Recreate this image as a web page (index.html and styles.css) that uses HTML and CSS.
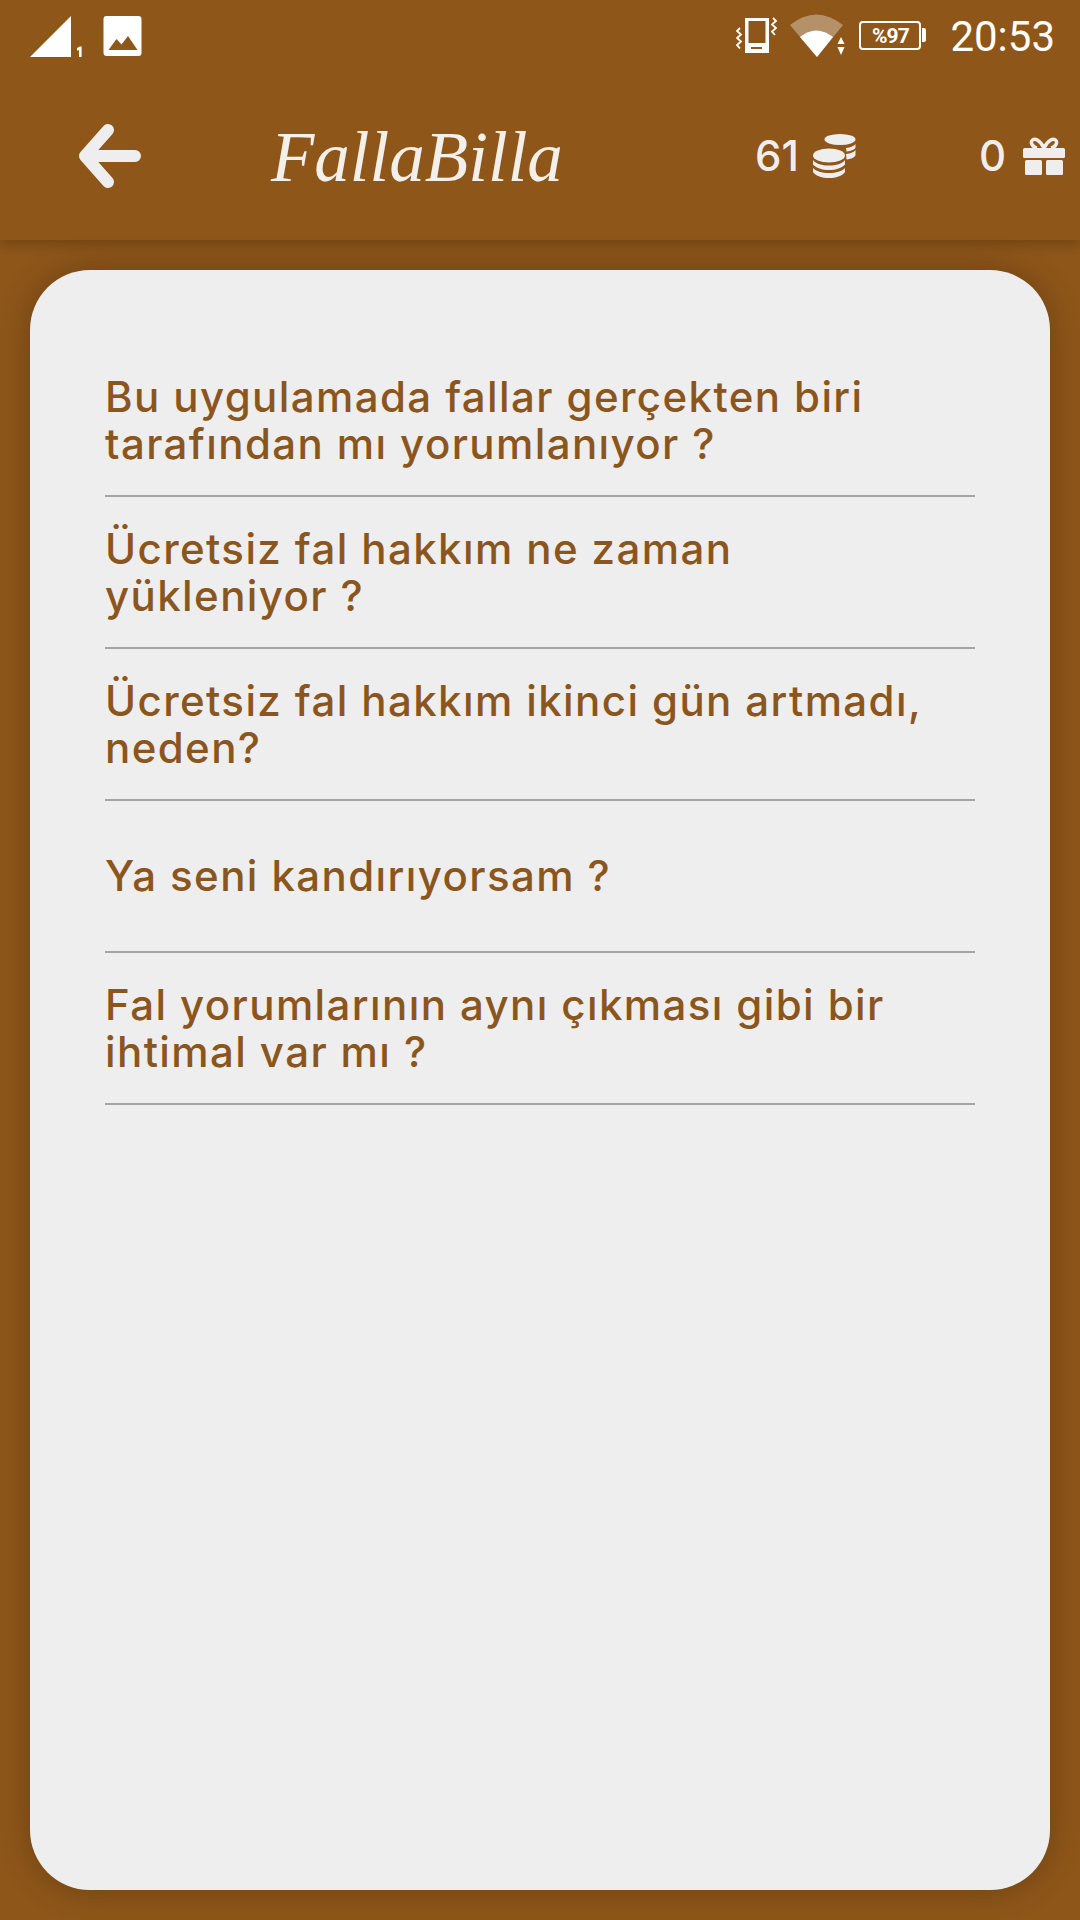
FILE: index.html
```html
<!DOCTYPE html>
<html lang="tr">
<head>
  <meta charset="UTF-8">
  <meta name="viewport" content="width=device-width, initial-scale=1.0">
  <title>FallaBilla</title>
  <link rel="stylesheet" href="styles.css">
</head>
<body>
  <header class="top">
    <!-- Status bar -->
    <div class="status">
      <div class="status-left">
        <svg class="ic-signal" viewBox="0 0 54 44"><path d="M0 42 L41 1 V42 Z" fill="#fff"/><path d="M47 33 l3-1.500 h1.600 V42 h-2.600 V35 l-2 .8 Z" fill="#fff"/></svg>
        <svg class="ic-picture" viewBox="0 0 38 40"><path fill-rule="evenodd" fill="#fff" d="M3 0 H35 Q38 0 38 3 V37 Q38 40 35 40 H3 Q0 40 0 37 V3 Q0 0 3 0 Z M5 34 H34 L24.500 20 L18 28.500 L13 23 Z"/></svg>
      </div>
      <div class="status-right">
        <svg class="ic-vibrate" viewBox="0 0 42 38"><g fill="none" stroke="#fff" stroke-width="1.800"><path d="M4 11 l-3 3 4 3.500-4 3.500 4 3.500-4 3.500 3 3.500"/><path d="M37 1 l3 3-4 3.500 4 3.500-4 3.500 3 3.500"/></g><path fill-rule="evenodd" fill="#fff" d="M9 1 H33 V36 H9 Z M12.500 4 V26 H29.500 V4 Z M15 30 V32 H26 V30 Z"/></svg>
        <svg class="ic-wifi" viewBox="0 0 56 44"><path d="M0 11 Q26 -10 53 11 L27 43 Z" fill="#fff" fill-opacity=".35"/><path d="M10 23 Q26 10 43 23 L27 43 Z" fill="#fff"/><path d="M51 23 l3.500 7 h-7 Z M47.500 33 h7 l-3.500 8 Z" fill="#fff"/></svg>
        <div class="battery"><span class="battery-text">%97</span></div>
        <span class="clock">20:53</span>
      </div>
    </div>
    <!-- App bar -->
    <div class="appbar">
      <svg class="ic-back" viewBox="0 0 62 64"><path d="M29 6 L6 32 L29 58 M8 32 H56" fill="none" stroke="#eeeeee" stroke-width="12" stroke-linecap="round" stroke-linejoin="round"/></svg>
      <div class="logo">FallaBilla</div>
      <div class="counter coins">
        <span>61</span>
        <svg class="ic-coins" viewBox="0 0 44 44"><g fill="#eeeeee"><ellipse cx="27" cy="5.500" rx="15.500" ry="5.500"/><path d="M33 14 C38 13.500 41 12 42.500 10 V13.500 C42 15.500 38 17 33.500 17.500 Z"/><path d="M33 20 C38 19.500 41 18 42.500 16 V21 C42 23 39 25 33.500 25.500 Z"/><ellipse cx="16" cy="21.500" rx="16" ry="7"/><path d="M0 26 C3 30 9 31.500 16 31.500 S29 30 32 26 V30.500 C29 34 23 36 16 36 S3 34 0 30.500 Z"/><path d="M0 34 C3 37.500 9 39 16 39 S29 37.500 32 34 V38 C29 42 23 44 16 44 S3 42 0 38 Z"/></g></svg>
      </div>
      <div class="counter gift">
        <span>0</span>
        <svg class="ic-gift" viewBox="0 0 42 38"><g fill="#eeeeee"><rect x="0" y="11" width="42" height="10" rx="1.500"/><rect x="2" y="23" width="17" height="15" rx="1.500"/><rect x="23" y="23" width="17" height="15" rx="1.500"/></g><path d="M21 11 C17 3 12 1 9.500 3 C7 5 9 10 14 11 M21 11 C25 3 30 1 32.500 3 C35 5 33 10 28 11" fill="none" stroke="#eeeeee" stroke-width="3.400"/></svg>
      </div>
    </div>
  </header>

  <main class="card">
    <ul class="faq">
      <li>Bu uygulamada fallar gerçekten biri<br>tarafından mı yorumlanıyor ?</li>
      <li>Ücretsiz fal hakkım ne zaman<br>yükleniyor ?</li>
      <li>Ücretsiz fal hakkım ikinci gün artmadı,<br>neden?</li>
      <li>Ya seni kandırıyorsam ?</li>
      <li>Fal yorumlarının aynı çıkması gibi bir<br>ihtimal var mı ?</li>
    </ul>
  </main>
</body>
</html>
```

FILE: styles.css
```css
html, body {
  margin: 0;
  height: 100%;
}
body {
  width: 1080px;
  height: 1920px;
  overflow: hidden;
  display: flex;
  flex-direction: column;
  background-color: #8e5619;
  font-family: Inter, "Noto Sans", sans-serif;
}

/* Top area */
.top {
  height: 240px;
  flex: none;
  display: flex;
  flex-direction: column;
  background-color: #8e5619;
  box-shadow: 0 4px 12px rgba(0, 0, 0, 0.22);
}
.status {
  height: 72px;
  display: flex;
  justify-content: space-between;
  align-items: flex-start;
}
.status-left {
  display: flex;
  padding: 15px 0 0 30px;
}
.status-right {
  display: flex;
  align-items: flex-start;
  padding-right: 25px;
}
.ic-signal {
  width: 54px;
  height: 44px;
}
.ic-picture {
  width: 41px;
  height: 40px;
  margin: 1px 0 0 18px;
}
.ic-vibrate {
  width: 42px;
  height: 38px;
  margin-top: 17px;
}
.ic-wifi {
  width: 56px;
  height: 44px;
  margin: 14px 0 0 12px;
}
.battery {
  position: relative;
  box-sizing: border-box;
  width: 62px;
  height: 29px;
  margin: 21px 0 0 13px;
  border: 2.500px solid #fff;
  border-radius: 4px;
  display: flex;
  align-items: center;
  justify-content: center;
}
.battery::after {
  content: "";
  position: absolute;
  right: -7px;
  top: 5px;
  width: 4px;
  height: 14px;
  background-color: #fff;
  border-radius: 0 2px 2px 0;
}
.battery-text {
  font-family: Roboto, sans-serif;
  font-size: 21px;
  font-weight: 700;
  letter-spacing: -1px;
  color: #fff;
}
.clock {
  font-family: Roboto, sans-serif;
  font-size: 42px;
  line-height: 48px;
  margin: 13px 0 0 29px;
  color: #fff;
}

.appbar {
  flex: 1;
  display: flex;
  align-items: center;
  color: #eeeeee;
}
.ic-back {
  width: 62px;
  height: 64px;
  margin: 0 0 0 79px;
}
.logo {
  font-family: "Liberation Serif", serif;
  font-style: italic;
  font-size: 71px;
  line-height: 80px;
  margin: 2px 0 0 130px;
  width: 369px;
  color: #f3efe9;
}
.counter {
  display: flex;
  align-items: center;
  font-size: 42px;
  font-weight: 500;
}
.coins {
  margin: -1px 0 0 115px;
}
.ic-coins {
  width: 44px;
  height: 44px;
  margin-left: 14px;
}
.gift {
  margin: -1px 0 0 122px;
}
.ic-gift {
  width: 42px;
  height: 38px;
  margin-left: 17px;
}

/* Card */
.card {
  box-sizing: border-box;
  height: 1620px;
  margin: 30px 30px 0;
  padding: 75px 75px 0;
  background-color: #eeeeee;
  border-radius: 60px;
  box-shadow: 0 0 34px rgba(0, 0, 0, 0.24);
}
.faq {
  list-style: none;
  margin: 0;
  padding: 0;
}
.faq li {
  box-sizing: border-box;
  height: 152px;
  display: flex;
  flex-direction: column;
  justify-content: center;
  align-items: flex-start;
  border-bottom: 2px solid #a3a3a3;
  padding-bottom: 1px;
  font-size: 42px;
  font-weight: 500;
  letter-spacing: 1.400px;
  line-height: 47px;
  color: #8b561d;
}
```
